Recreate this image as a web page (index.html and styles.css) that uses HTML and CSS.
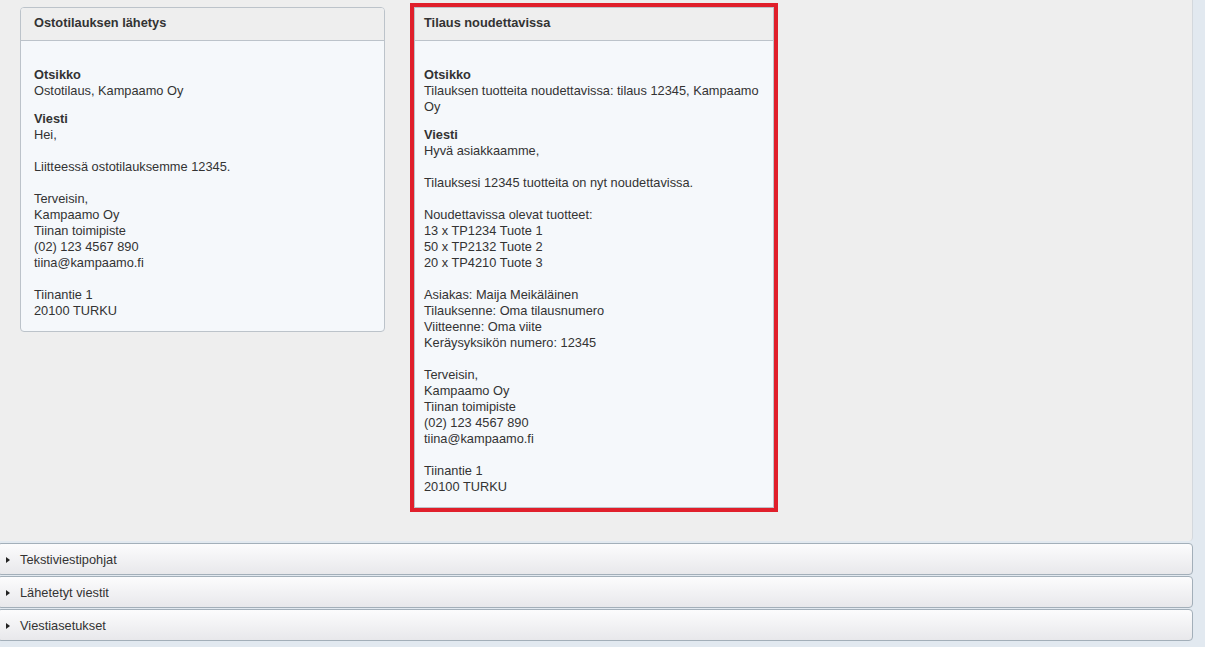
FILE: index.html
```html
<!DOCTYPE html>
<html lang="fi">
<head>
<meta charset="utf-8">
<title>Viestipohjat</title>
<link rel="stylesheet" href="styles.css">
</head>
<body>
<div class="panel">
  <div class="cards">
    <div class="card">
      <div class="card-head">Ostotilauksen lähetys</div>
      <div class="card-body">
        <div class="block">
          <div class="label">Otsikko</div>
          <div>Ostotilaus, Kampaamo Oy</div>
        </div>
        <div class="block">
          <div class="label">Viesti</div>
          <div>Hei,<br><br>Liitteessä ostotilauksemme 12345.<br><br>Terveisin,<br>Kampaamo Oy<br>Tiinan toimipiste<br>(02) 123 4567 890<br>tiina@kampaamo.fi<br><br>Tiinantie 1<br>20100 TURKU</div>
        </div>
      </div>
    </div>
    <div class="card card-selected">
      <div class="card-head">Tilaus noudettavissa</div>
      <div class="card-body">
        <div class="block">
          <div class="label">Otsikko</div>
          <div>Tilauksen tuotteita noudettavissa: tilaus 12345, Kampaamo Oy</div>
        </div>
        <div class="block">
          <div class="label">Viesti</div>
          <div>Hyvä asiakkaamme,<br><br>Tilauksesi 12345 tuotteita on nyt noudettavissa.<br><br>Noudettavissa olevat tuotteet:<br>13 x TP1234 Tuote 1<br>50 x TP2132 Tuote 2<br>20 x TP4210 Tuote 3<br><br>Asiakas: Maija Meikäläinen<br>Tilauksenne: Oma tilausnumero<br>Viitteenne: Oma viite<br>Keräysyksikön numero: 12345<br><br>Terveisin,<br>Kampaamo Oy<br>Tiinan toimipiste<br>(02) 123 4567 890<br>tiina@kampaamo.fi<br><br>Tiinantie 1<br>20100 TURKU</div>
        </div>
      </div>
    </div>
  </div>
</div>
<div class="accordions">
  <div class="acc"><span class="tri"></span>Tekstiviestipohjat</div>
  <div class="acc"><span class="tri"></span>Lähetetyt viestit</div>
  <div class="acc"><span class="tri"></span>Viestiasetukset</div>
</div>
</body>
</html>
```
FILE: styles.css
```css
html, body {
  margin: 0;
  padding: 0;
}
body {
  background: #e2e9f0;
  font-family: "Liberation Sans", Arial, sans-serif;
  font-size: 12.8px;
  line-height: 16px;
  color: #333;
  width: 1205px;
  height: 647px;
  overflow: hidden;
}
.panel {
  width: 1193px;
  height: 541px;
  box-sizing: border-box;
  background: #eeeeee;
  border-right: 1px solid #d3d8dd;
  border-bottom-right-radius: 4px;
}
.cards {
  display: flex;
  align-items: flex-start;
  gap: 29px;
  padding: 7px 0 0 20px;
}
.card {
  width: 365px;
  box-sizing: border-box;
  border: 1px solid #bcc3ca;
  border-radius: 4px;
  background: #f5f8fb;
  overflow: hidden;
}
.card-head {
  background: #eeeeee;
  border-bottom: 1px solid #bcc3ca;
  height: 32px;
  line-height: 30px;
  padding: 0 13px;
  font-weight: bold;
}
.card-body {
  padding: 26px 13px 12px;
}
.card-selected {
  width: 360px;
  outline: 4px solid #e01f2b;
  border-radius: 0;
}
.card-selected .card-head,
.card-selected .card-body {
  padding-left: 9px;
  padding-right: 9px;
}
.block + .block {
  margin-top: 12px;
}
.label {
  font-weight: bold;
}
.accordions {
  display: flex;
  flex-direction: column;
  gap: 1px;
  padding-top: 2px;
  margin-left: -3px;
}
.acc {
  width: 1196px;
  box-sizing: border-box;
  height: 32px;
  border: 1px solid #a3afb9;
  border-radius: 4px;
  background: linear-gradient(#fcfcfd, #e8e8eb);
  display: flex;
  align-items: center;
  padding-left: 8px;
  padding-top: 1px;
  color: #333;
}
.tri {
  width: 0;
  height: 0;
  border-top: 3.5px solid transparent;
  border-bottom: 3.5px solid transparent;
  border-left: 4px solid #222;
  margin-right: 10px;
}
```
